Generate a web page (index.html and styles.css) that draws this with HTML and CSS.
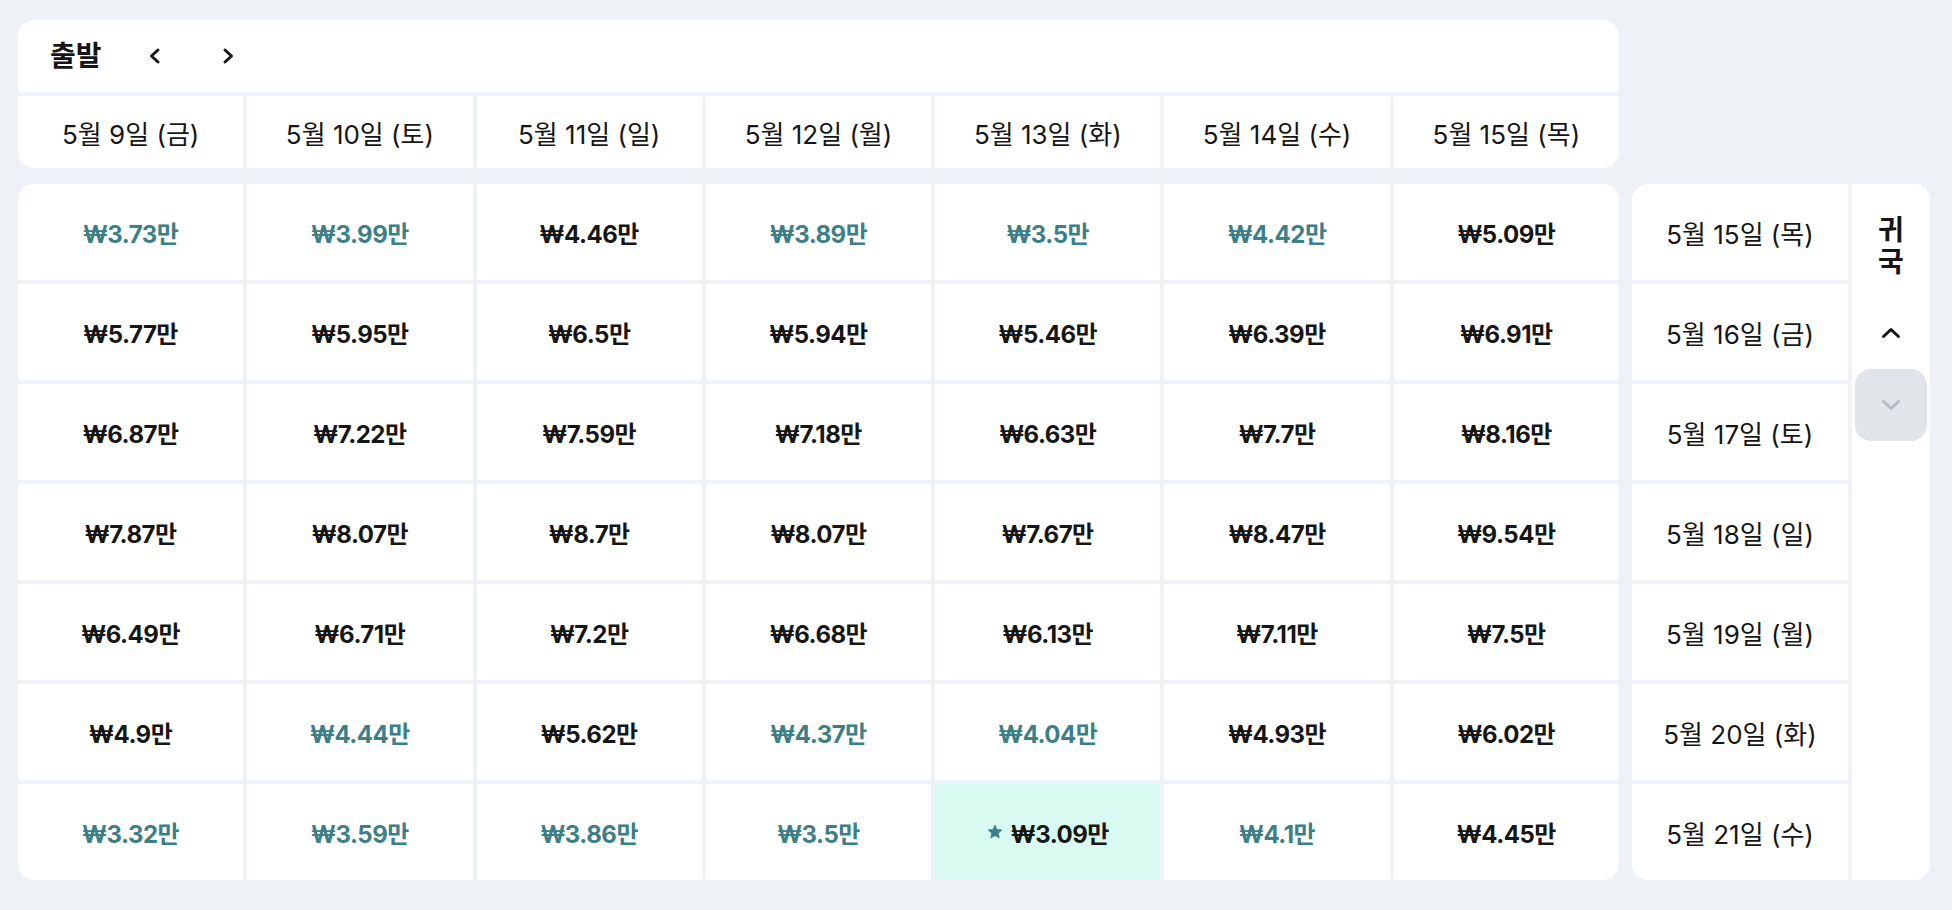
FILE: index.html
```html
<!DOCTYPE html>
<html lang="ko">
<head>
<meta charset="utf-8">
<title>출발 / 귀국 가격 달력</title>
<link rel="stylesheet" href="styles.css">
</head>
<body>
<div class="page">
  <section class="head-card">
    <div class="title-row">
      <h2 class="title">출발</h2>
      <div class="nav">
        <button class="nav-btn" aria-label="이전">
          <svg viewBox="0 0 24 24" width="24" height="24"><path d="M15 6 L8.5 12 L15 18" fill="none" stroke="#161616" stroke-width="3" stroke-linecap="round" stroke-linejoin="round"/></svg>
        </button>
        <button class="nav-btn" aria-label="다음">
          <svg viewBox="0 0 24 24" width="24" height="24"><path d="M9 6 L15.5 12 L9 18" fill="none" stroke="#161616" stroke-width="3" stroke-linecap="round" stroke-linejoin="round"/></svg>
        </button>
      </div>
    </div>
    <div class="date-row">
      <div class="date-cell">5월 9일 (금)</div>
      <div class="date-cell">5월 10일 (토)</div>
      <div class="date-cell">5월 11일 (일)</div>
      <div class="date-cell">5월 12일 (월)</div>
      <div class="date-cell">5월 13일 (화)</div>
      <div class="date-cell">5월 14일 (수)</div>
      <div class="date-cell">5월 15일 (목)</div>
    </div>
  </section>

  <div class="body-row">
    <section class="price-grid">
      <div class="cell low">₩3.73만</div>
      <div class="cell low">₩3.99만</div>
      <div class="cell">₩4.46만</div>
      <div class="cell low">₩3.89만</div>
      <div class="cell low">₩3.5만</div>
      <div class="cell low">₩4.42만</div>
      <div class="cell">₩5.09만</div>

      <div class="cell">₩5.77만</div>
      <div class="cell">₩5.95만</div>
      <div class="cell">₩6.5만</div>
      <div class="cell">₩5.94만</div>
      <div class="cell">₩5.46만</div>
      <div class="cell">₩6.39만</div>
      <div class="cell">₩6.91만</div>

      <div class="cell">₩6.87만</div>
      <div class="cell">₩7.22만</div>
      <div class="cell">₩7.59만</div>
      <div class="cell">₩7.18만</div>
      <div class="cell">₩6.63만</div>
      <div class="cell">₩7.7만</div>
      <div class="cell">₩8.16만</div>

      <div class="cell">₩7.87만</div>
      <div class="cell">₩8.07만</div>
      <div class="cell">₩8.7만</div>
      <div class="cell">₩8.07만</div>
      <div class="cell">₩7.67만</div>
      <div class="cell">₩8.47만</div>
      <div class="cell">₩9.54만</div>

      <div class="cell">₩6.49만</div>
      <div class="cell">₩6.71만</div>
      <div class="cell">₩7.2만</div>
      <div class="cell">₩6.68만</div>
      <div class="cell">₩6.13만</div>
      <div class="cell">₩7.11만</div>
      <div class="cell">₩7.5만</div>

      <div class="cell">₩4.9만</div>
      <div class="cell low">₩4.44만</div>
      <div class="cell">₩5.62만</div>
      <div class="cell low">₩4.37만</div>
      <div class="cell low">₩4.04만</div>
      <div class="cell">₩4.93만</div>
      <div class="cell">₩6.02만</div>

      <div class="cell low">₩3.32만</div>
      <div class="cell low">₩3.59만</div>
      <div class="cell low">₩3.86만</div>
      <div class="cell low">₩3.5만</div>
      <div class="cell best"><svg class="star" viewBox="0 0 24 24" width="16" height="16"><path d="M12 1.5 L15 8.2 L22.3 8.9 L16.8 13.8 L18.4 21 L12 17.3 L5.6 21 L7.2 13.8 L1.7 8.9 L9 8.2 Z" fill="#3d7f87" stroke="#3d7f87" stroke-width="1.2" stroke-linejoin="round"/></svg>₩3.09만</div>
      <div class="cell low">₩4.1만</div>
      <div class="cell">₩4.45만</div>
    </section>

    <section class="return-card">
      <div class="return-col">
        <div class="return-cell">5월 15일 (목)</div>
        <div class="return-cell">5월 16일 (금)</div>
        <div class="return-cell">5월 17일 (토)</div>
        <div class="return-cell">5월 18일 (일)</div>
        <div class="return-cell">5월 19일 (월)</div>
        <div class="return-cell">5월 20일 (화)</div>
        <div class="return-cell">5월 21일 (수)</div>
      </div>
      <div class="side">
        <h2 class="side-title">귀<br>국</h2>
        <button class="side-btn" aria-label="위로">
          <svg viewBox="0 0 24 24" width="24" height="24"><path d="M4.5 15.5 L12 8.5 L19.5 15.5" fill="none" stroke="#161616" stroke-width="3" stroke-linecap="round" stroke-linejoin="round"/></svg>
        </button>
        <button class="side-btn disabled" aria-label="아래로">
          <svg viewBox="0 0 24 24" width="24" height="24"><path d="M4.5 8.5 L12 15.5 L19.5 8.5" fill="none" stroke="#b7bcc2" stroke-width="3" stroke-linecap="round" stroke-linejoin="round"/></svg>
        </button>
      </div>
    </section>
  </div>
</div>
</body>
</html>
```

FILE: styles.css
```css
* { box-sizing: border-box; }

html, body {
  margin: 0;
  padding: 0;
  background: #eef2f7;
}

body {
  font-family: "Inter", "Noto Sans CJK KR", sans-serif;
  color: #161616;
}

.page {
  padding: 20px 22px 0 18px;
  display: flex;
  flex-direction: column;
  gap: 16px;
}

.head-card {
  width: 1601px;
  border-radius: 16px;
  overflow: hidden;
  display: flex;
  flex-direction: column;
  gap: 4px;
}

.title-row {
  height: 72px;
  background: #fff;
  display: flex;
  align-items: center;
  padding-left: 32px;
}

.title {
  margin: 0;
  font-size: 28px;
  font-weight: 700;
  line-height: 32px;
}

.nav {
  display: flex;
  gap: 33px;
  margin-left: 33px;
}

.nav-btn, .side-btn {
  border: 0;
  background: transparent;
  padding: 0;
  display: flex;
  align-items: center;
  justify-content: center;
  cursor: pointer;
}

.nav-btn {
  width: 40px;
  height: 40px;
}

.date-row, .price-grid {
  display: grid;
  grid-template-columns: repeat(7, 1fr);
  gap: 4px;
}

.date-cell {
  height: 72px;
  background: #fff;
  display: flex;
  align-items: center;
  justify-content: center;
  font-size: 26px;
}

.body-row {
  display: flex;
  gap: 13px;
}

.price-grid {
  width: 1601px;
  grid-auto-rows: 96px;
  border-radius: 16px;
  overflow: hidden;
}

.cell {
  background: #fff;
  display: flex;
  align-items: center;
  justify-content: center;
  font-size: 24px;
  font-weight: 700;
  letter-spacing: -0.5px;
  color: #161616;
}

.cell.low {
  color: #3d7f87;
}

.cell.best {
  background: #d9faf0;
}

.star {
  margin-right: 8px;
}

.return-card {
  width: 298px;
  border-radius: 16px;
  overflow: hidden;
  display: flex;
  gap: 4px;
}

.return-col {
  width: 216px;
  display: grid;
  grid-auto-rows: 96px;
  gap: 4px;
}

.return-cell {
  background: #fff;
  display: flex;
  align-items: center;
  justify-content: center;
  font-size: 26px;
}

.side {
  flex: 1;
  background: #fff;
  display: flex;
  flex-direction: column;
  align-items: center;
  padding-top: 30px;
}

.side-title {
  margin: 0 0 19px;
  font-size: 28px;
  font-weight: 700;
  line-height: 32px;
  text-align: center;
}

.side-btn {
  width: 72px;
  height: 72px;
  border-radius: 16px;
}

.side-btn.disabled {
  background: #e1e5e9;
}
```
